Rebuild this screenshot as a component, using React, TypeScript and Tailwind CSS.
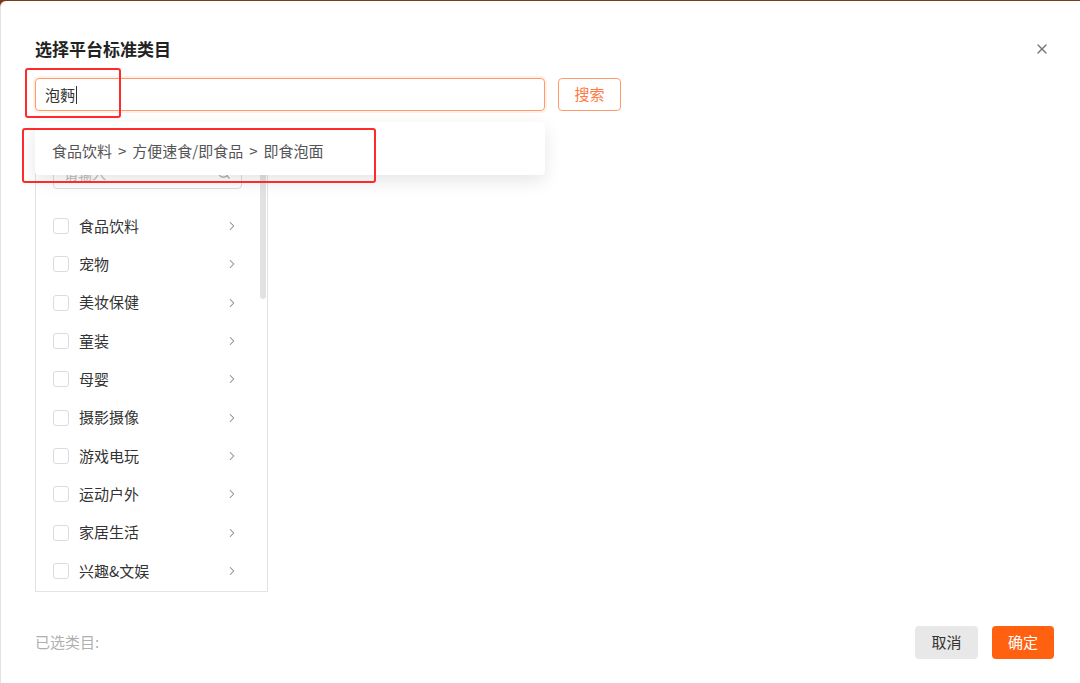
import { X, ChevronRight, Search } from 'lucide-react'

const categories = [
  '食品饮料', '宠物', '美妆保健', '童装', '母婴',
  '摄影摄像', '游戏电玩', '运动户外', '家居生活', '兴趣&文娱',
]

const path = ['食品饮料', '方便速食/即食品', '即食泡面']

const font = { fontFamily: '"Noto Sans CJK SC", "Noto Sans", sans-serif' }

export default function App() {
  return (
    <div className="relative w-[1080px] h-[683px] bg-[#7b3a1c] flex flex-col overflow-hidden" style={font}>
      <div className="mt-[1px] flex-1 bg-white rounded-tl-[6px] border-l border-[#e3e3e3] flex flex-col pl-[34px] pr-[26px]">
        {/* header */}
        <div className="mt-[36px] h-[24px] flex items-center justify-between">
          <h2 className="text-[17px] font-bold text-[#222] leading-[24px]">选择平台标准类目</h2>
          <button className="mr-[4px] text-[#777]"><X size={16} strokeWidth={2} /></button>
        </div>

        {/* search row */}
        <div className="mt-[17px] flex gap-[13px]">
          <div className="w-[510px] h-[33px] border border-[#ff9b6b] rounded-[4px] shadow-[0_0_0_2px_rgba(255,110,30,0.1)] flex items-center px-[9px]">
            <span className="text-[15px] text-[#333] leading-none">泡麪</span>
            <span className="w-px h-[18px] bg-[#333] ml-px" />
          </div>
          <button className="w-[63px] h-[33px] border border-[#ff9b6b] rounded-[4px] text-[15px] text-[#ff7a45]">搜索</button>
        </div>

        {/* category panel */}
        <div className="relative mt-[29px] w-[233px] h-[452px] border border-[#e3e3e3] overflow-hidden">
          <div className="pt-[16px] px-[17px]">
            <div className="h-[32px] w-[189px] border border-[#dcdcdc] rounded-[4px] flex items-center justify-between px-[10px]">
              <span className="text-[14px] text-[#bbb]">请输入</span>
              <Search size={14} className="text-[#aaa]" />
            </div>
          </div>
          <ul className="mt-[18px]">
            {categories.map(c => (
              <li key={c} className="h-[38.3px] flex items-center pl-[17px] pr-[28px]">
                <span className="w-[16px] h-[16px] border border-[#dcdcdc] rounded-[3px] bg-white" />
                <span className="ml-[10px] flex-1 text-[15px] text-[#333]">{c}</span>
                <ChevronRight size={14} strokeWidth={1.8} className="text-[#888]" />
              </li>
            ))}
          </ul>
          <div className="absolute right-[1px] top-[10px] w-[6px] h-[148px] rounded-full bg-[#e2e2e2]" />
        </div>

        {/* footer */}
        <div className="mt-auto mb-[24px] flex items-center justify-between">
          <span className="text-[15px] text-[#b0b0b0]">已选类目:</span>
          <div className="flex gap-[14px]">
            <button className="w-[63px] h-[33px] rounded-[4px] bg-[#e8e8e8] text-[15px] text-[#333]">取消</button>
            <button className="w-[62px] h-[33px] rounded-[4px] bg-[#ff6110] text-[15px] text-white">确定</button>
          </div>
        </div>
      </div>

      {/* suggestion dropdown */}
      <div className="absolute left-[35px] top-[122px] w-[510px] h-[53px] bg-white rounded-[4px] shadow-[0_6px_18px_rgba(0,0,0,0.1)] pl-[17px] pt-[19px]">
        <div className="flex text-[15px] leading-[20px] text-[#555]">
          {path.map((p, i) => (
            <span key={p} className="flex">
              {i > 0 && <span className="px-[6px]">&gt;</span>}
              {p}
            </span>
          ))}
        </div>
      </div>

      {/* annotation boxes */}
      <div className="absolute left-[25px] top-[68px] w-[96px] h-[50px] border-2 border-[#ff2b2b] rounded-[3px]" />
      <div className="absolute left-[22px] top-[128px] w-[354px] h-[55px] border-2 border-[#ff2b2b] rounded-[3px]" />
    </div>
  )
}
